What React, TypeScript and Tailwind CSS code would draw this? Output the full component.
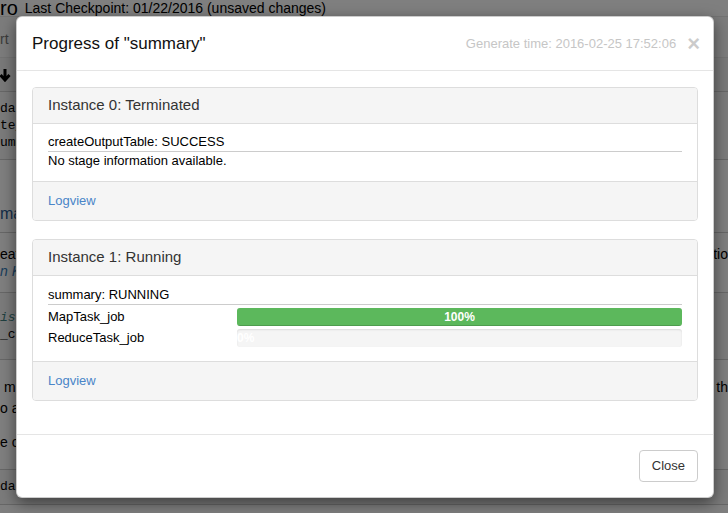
import React from "react";

const mono = "font-['Liberation_Mono','DejaVu_Sans_Mono',monospace]";

function Notebook() {
  return (
    <div className="flex h-full flex-col bg-white">
      <div className="flex h-[16px] items-center gap-[7px] overflow-hidden leading-none">
        <span className="text-[20px] text-black">ro</span>
        <span className="text-[14px] text-black">Last Checkpoint: 01/22/2016 (unsaved changes)</span>
      </div>
      <div className="flex h-[42px] items-center justify-between border-y border-[#e7e7e7] bg-[#f8f8f8] pt-[5px] text-[14px] text-[#777]">
        <span>rt</span>
        <span />
      </div>
      <div className="flex h-[34px] items-center border-b border-[#cfcfcf] bg-[#f2f2f2]">
        <svg width="12" height="14" viewBox="0 0 12 14" className="-ml-[1px]">
          <path d="M6 1v10M1.5 7l4.5 5 4.5-5" fill="none" stroke="#000" strokeWidth="3" />
        </svg>
      </div>
      <div className={`flex h-[68px] flex-col justify-center border-b border-[#cfcfcf] bg-[#f7f7f7] text-[13px] leading-[17px] text-black ${mono}`}>
        <span>data</span>
        <span>te_t</span>
        <span>umma</span>
      </div>
      <div className="flex h-[73px] items-end justify-between border-b border-[#cfcfcf] pb-[6px] text-[16px] text-[#2a5a90]">
        <span>ma</span>
        <span />
      </div>
      <div className="flex h-[60px] flex-col justify-center border-b border-[#cfcfcf] text-[14px] leading-[17px] text-black">
        <div className="flex justify-between">
          <span>eate</span>
          <span>atio</span>
        </div>
        <span className="italic text-[#337ab7]">n Ku</span>
      </div>
      <div className={`flex h-[67px] flex-col justify-center border-b border-[#cfcfcf] bg-[#f7f7f7] text-[13px] leading-[17px] ${mono}`}>
        <span className="italic text-[#408080]">ist</span>
        <span className="text-black">_co</span>
      </div>
      <div className="flex h-[110px] flex-col border-b border-[#cfcfcf] pt-[17px] text-[14px] leading-[21px] text-black">
        <div className="flex justify-between">
          <span>&nbsp;m</span>
          <span>th</span>
        </div>
        <span>o a</span>
        <span className="mt-[13px]">e c</span>
      </div>
      <div className={`flex h-[35px] items-center border-b border-[#cfcfcf] bg-[#f7f7f7] text-[13px] text-black ${mono}`}>
        <span>data</span>
      </div>
    </div>
  );
}

function Panel({
  title,
  children,
  last,
}: {
  title: string;
  children: React.ReactNode;
  last?: boolean;
}) {
  return (
    <div className={`rounded-[4px] border border-[#dddddd] ${last ? "" : "mb-[18px]"}`}>
      <div className="flex h-[36px] items-center rounded-t-[3px] border-b border-[#dddddd] bg-[#f5f5f5] px-[15px] text-[15px] text-[#333]">
        {title}
      </div>
      {children}
      <div className="rounded-b-[3px] border-t border-[#dddddd] bg-[#f5f5f5] px-[15px] py-[10px] text-[13px] leading-[18px]">
        <a className="text-[#4a85c8]">Logview</a>
      </div>
    </div>
  );
}

function TaskRow({ name, pct }: { name: string; pct: number }) {
  return (
    <div className="flex items-center text-[13px] leading-[18px] text-black">
      <div className="w-[189px] shrink-0">{name}</div>
      <div className="relative h-[18px] flex-1 overflow-hidden rounded-[3px] bg-[#f5f5f5] shadow-[inset_0_1px_2px_rgba(0,0,0,0.1)]">
        <div
          className="h-full bg-[#5cb85c] shadow-[inset_0_-1px_0_rgba(0,0,0,0.15)]"
          style={{ width: `${pct}%` }}
        />
        <span
          className={`absolute inset-y-0 flex items-center text-[12px] font-bold text-white ${
            pct > 0 ? "inset-x-0 justify-center" : "left-0"
          }`}
        >
          {pct}%
        </span>
      </div>
    </div>
  );
}

export default function App() {
  return (
    <div className="relative h-[513px] w-[728px] overflow-hidden font-['Liberation_Sans',Arial,sans-serif] text-[#333]">
      <Notebook />
      <div className="absolute inset-0 bg-black/50" />

      <div className="absolute left-[16px] top-[16px] w-[698px] rounded-[6px] border border-black/20 bg-white shadow-[0_5px_15px_rgba(0,0,0,0.5)]">
        <div className="flex h-[54px] items-center border-b border-[#e5e5e5] px-[15px]">
          <h4 className="flex-1 text-[17px] text-[#111]">Progress of "summary"</h4>
          <span className="text-[13px] text-[#c6c6c6]">Generate time: 2016-02-25 17:52:06</span>
          <button className="ml-[11px] mr-[-2px] text-[22px] font-bold leading-none text-black opacity-20">×</button>
        </div>

        <div className="px-[15px] pb-[15px] pt-[16px]">
          <Panel title="Instance 0: Terminated">
            <div className="px-[15px] pb-[11px] pt-[9px] text-[13px] leading-[18px] text-black">
              <div className="border-b border-[#cccccc]">createOutputTable: SUCCESS</div>
              <div>No stage information available.</div>
            </div>
          </Panel>

          <Panel title="Instance 1: Running" last>
            <div className="px-[15px] pb-[14px] pt-[10px]">
              <div className="border-b border-[#cccccc] text-[13px] leading-[18px] text-black">
                summary: RUNNING
              </div>
              <div className="mt-[3px] flex flex-col gap-[3px]">
                <TaskRow name="MapTask_job" pct={100} />
                <TaskRow name="ReduceTask_job" pct={0} />
              </div>
            </div>
          </Panel>
          <div className="h-[18px]" />
        </div>

        <div className="flex justify-end border-t border-[#e5e5e5] p-[15px]">
          <button className="h-[32px] rounded-[4px] border border-[#cccccc] bg-white px-[12px] text-[13px] text-[#333]">
            Close
          </button>
        </div>
      </div>
    </div>
  );
}
